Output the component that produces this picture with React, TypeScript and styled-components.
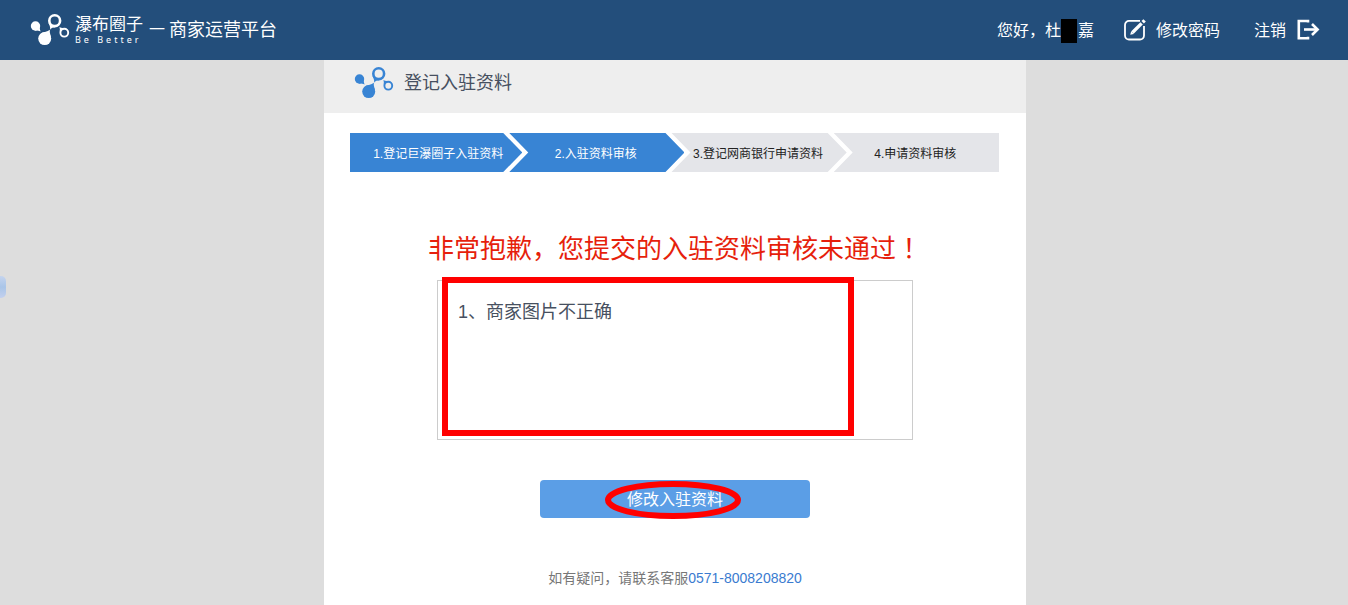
import React from "react";
import styled, { createGlobalStyle } from "styled-components";

const GlobalStyle = createGlobalStyle`
  *, *::before, *::after { box-sizing: border-box; }
  body {
    margin: 0;
    background: #dddddd;
    color: #475060;
    font-family: "Liberation Sans", "Noto Sans CJK SC", sans-serif;
    font-weight: 400;
  }
  h1, h2, p, ol { margin: 0; padding: 0; font-weight: inherit; }
  a { color: inherit; text-decoration: none; }
`;

const Page = styled.div`
  position: relative;
  display: flex;
  flex-direction: column;
  min-height: 100vh;
`;

const TopBar = styled.header`
  display: flex;
  align-items: center;
  justify-content: space-between;
  height: 60px;
  padding: 0 28px 0 30px;
  background: #234e7b;
  color: #ffffff;
`;

const Brand = styled.div`
  display: flex;
  align-items: center;
`;

const BrandText = styled.div`
  display: flex;
  flex-direction: column;
  margin-left: 5px;
`;

const BrandName = styled.span`
  font-size: 17px;
  line-height: 20px;
`;

const BrandSlogan = styled.span`
  font-family: "Noto Sans", sans-serif;
  font-size: 9px;
  line-height: 10px;
  letter-spacing: 3px;
`;

const Platform = styled.h1`
  display: flex;
  align-items: center;
  gap: 4px;
  margin-left: 6px;
  font-size: 18px;
  line-height: 24px;
`;

const Dash = styled.span`
  font-size: 16px;
`;

const UserNav = styled.nav`
  display: flex;
  align-items: center;
  font-size: 16px;
  line-height: 24px;
  padding-top: 2px;
`;

const Greeting = styled.span`
  display: flex;
  align-items: center;
  margin-right: 30px;
`;

const Redaction = styled.span`
  width: 16px;
  height: 24px;
  background: #000000;
  margin-right: 1px;
`;

const NavLink = styled.a`
  display: flex;
  align-items: center;
  gap: 10px;

  svg {
    margin-bottom: 2px;
  }

  & + & {
    margin-left: 34px;
  }
`;

const Panel = styled.main`
  flex: 1;
  width: 100%;
  max-width: 702px;
  margin: 0 auto;
  background: #ffffff;
`;

const Body = styled.div`
  display: flex;
  flex: 1;
  padding-left: 2px;
`;

const PanelHeader = styled.div`
  display: flex;
  align-items: center;
  gap: 10px;
  height: 53px;
  padding: 0 30px 8px;
  background: #eeeeee;
`;

const PanelTitle = styled.h2`
  font-size: 18px;
  line-height: 24px;
`;

const Steps = styled.ol`
  display: flex;
  margin: 20px 27px 0 26px;
  list-style: none;
`;

const Step = styled.li<{ $share: number; $done?: boolean; $place?: "first" | "last" }>`
  flex: ${(p) => p.$share} 1 0;
  height: 39px;
  padding: ${(p) => (p.$place === "first" ? "0 0 0 4px" : "0 2px 0 0")};
  margin-left: ${(p) => (p.$place === "first" ? "0" : "-13px")};
  background: ${(p) => (p.$done ? "#3884d4" : "#e4e5e9")};
  color: ${(p) => (p.$done ? "#ffffff" : "#222222")};
  font-size: 12px;
  line-height: 42px;
  text-align: center;
  white-space: nowrap;
  clip-path: ${(p) =>
    p.$place === "first"
      ? "polygon(0 0, calc(100% - 19px) 0, 100% 50%, calc(100% - 19px) 100%, 0 100%)"
      : p.$place === "last"
        ? "polygon(0 0, 100% 0, 100% 100%, 0 100%, 19px 50%)"
        : "polygon(0 0, calc(100% - 19px) 0, 100% 50%, calc(100% - 19px) 100%, 0 100%, 19px 50%)"};
`;

const Result = styled.section`
  display: flex;
  flex-direction: column;
  align-items: center;
  padding: 55px 0 16px;
`;

const ResultTitle = styled.p`
  color: #e61f0c;
  font-size: 26px;
  line-height: 40px;
`;

const Mark = styled.span`
  font-family: "Noto Sans CJK JP", sans-serif;
`;

const ReasonBox = styled.div`
  position: relative;
  width: 476px;
  max-width: 100%;
  height: 160px;
  margin-top: 11px;
  padding: 18px 20px;
  border: 1px solid #cccccc;
  font-size: 18px;
  line-height: 26px;
`;

const Highlight = styled.div`
  position: absolute;
  top: -4px;
  left: 4px;
  width: 412px;
  height: 159px;
  border: 6px solid #ff0000;
`;

const EditButton = styled.button`
  position: relative;
  width: 270px;
  height: 38px;
  margin-top: 40px;
  padding: 2px 0 0;
  border: 0;
  border-radius: 4px;
  background: #5b9ee6;
  color: #ffffff;
  font: inherit;
  font-size: 16px;
  line-height: 36px;
`;

const Ring = styled.svg`
  position: absolute;
  top: 0;
  left: 64px;
`;

const Help = styled.p`
  margin-top: 50px;
  color: #777777;
  font-size: 14px;
  line-height: 20px;
`;

const Phone = styled.a`
  color: #3a7bd0;
`;

const EdgeTab = styled.div`
  position: absolute;
  top: 276px;
  left: 0;
  width: 6px;
  height: 22px;
  border-radius: 0 5px 5px 0;
  background: linear-gradient(#c5d4ee, #a9c5e8 50%, #c3d0ee);
`;

function Logo({ color }: { color: string }) {
  return (
    <svg width="40" height="34" viewBox="0 0 40 34" fill={color} aria-hidden="true">
      <circle cx="5.500" cy="13" r="4.700" />
      <path d="M9.900 11.500C9.600 14.500 9.700 16 10.600 18.600C8.500 17.500 7 17.400 4.500 17.500Z" />
      <circle cx="14.700" cy="25.600" r="6.500" />
      <path d="M11 20.300C14.500 19 17 18.800 19.900 16.800C19.400 20 20.500 21.500 21 24Z" />
      <circle cx="24.700" cy="7.700" r="5.400" fill="none" stroke={color} strokeWidth="2.600" />
      <path d="M18.200 9.500C19.500 12 20.300 13.500 20.200 16.800C21.500 14.800 23 14.300 25.500 14.200L21.500 12Z" />
      <circle cx="34.300" cy="19.700" r="3.900" fill="none" stroke={color} strokeWidth="1.900" />
      <path d="M29.600 18.600C30 17 29.900 15.800 29.400 14C31 15 32.300 15.200 34 14.900L31.400 17Z" />
    </svg>
  );
}

function EditIcon() {
  return (
    <svg width="22" height="22" viewBox="0 0 22 22" fill="none" stroke="#fff" aria-hidden="true">
      <path d="M16 1.900H5A4 4 0 0 0 1 5.900V16.500a4 4 0 0 0 4 4H16a4 4 0 0 0 4-4V7" strokeWidth="1.800" />
      <path d="M8.500 13.500 17.600 4.400" strokeWidth="3.400" />
      <path d="M6.200 15.800 7.200 12.200 9.900 14.900Z" fill="#fff" stroke="none" />
      <path d="M18.700 3.300 20.600 1.400" strokeWidth="3.400" />
    </svg>
  );
}

function ExitIcon() {
  return (
    <svg width="24" height="22" viewBox="0 0 24 22" fill="none" stroke="#fff" strokeWidth="2.600" aria-hidden="true">
      <path d="M12 3.500V2H2.800v17.200H12v-1.500" />
      <path d="M8 10.500h13" />
      <path d="m16 5 5.600 5.500L16 16" />
    </svg>
  );
}

export default function App() {
  return (
    <Page>
      <GlobalStyle />
      <TopBar>
        <Brand>
          <Logo color="#ffffff" />
          <BrandText>
            <BrandName>瀑布圈子</BrandName>
            <BrandSlogan>Be Better</BrandSlogan>
          </BrandText>
          <Platform>
            <Dash>一</Dash>商家运营平台
          </Platform>
        </Brand>
        <UserNav>
          <Greeting>
            您好，杜
            <Redaction />嘉
          </Greeting>
          <NavLink href="#password">
            <EditIcon />
            修改密码
          </NavLink>
          <NavLink href="#logout">
            注销
            <ExitIcon />
          </NavLink>
        </UserNav>
      </TopBar>

      <Body>
        <Panel>
          <PanelHeader>
            <Logo color="#3884d4" />
            <PanelTitle>登记入驻资料</PanelTitle>
          </PanelHeader>

          <Steps>
            <Step $share={170} $done $place="first">1.登记巨瀑圈子入驻资料</Step>
            <Step $share={175} $done>2.入驻资料审核</Step>
            <Step $share={175}>3.登记网商银行申请资料</Step>
            <Step $share={165} $place="last">4.申请资料审核</Step>
          </Steps>

          <Result>
            <ResultTitle>
              非常抱歉，您提交的入驻资料审核未通过<Mark>！</Mark>
            </ResultTitle>
            <ReasonBox>
              <p>1、商家图片不正确</p>
              <Highlight />
            </ReasonBox>
            <EditButton type="button">
              修改入驻资料
              <Ring width="138" height="40" viewBox="0 0 138 40" fill="none" aria-hidden="true">
                <ellipse cx="69" cy="20" rx="65" ry="16" stroke="#ff0000" strokeWidth="6" />
              </Ring>
            </EditButton>
            <Help>
              如有疑问，请联系客服<Phone href="tel:0571-8008208820">0571-8008208820</Phone>
            </Help>
          </Result>
        </Panel>
      </Body>
      <EdgeTab />
    </Page>
  );
}
